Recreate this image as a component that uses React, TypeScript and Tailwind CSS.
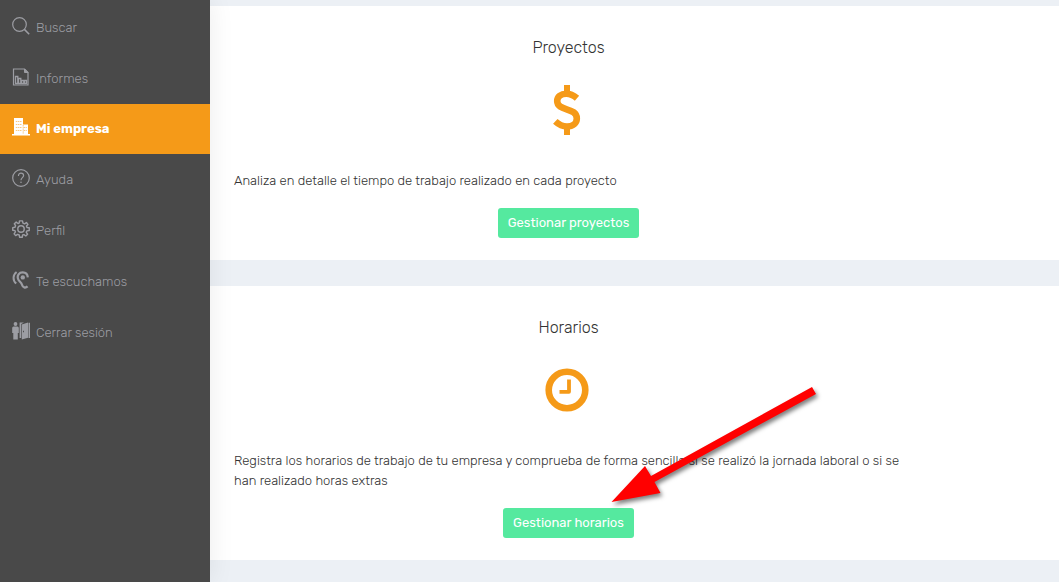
import type { ReactNode } from "react";
import { clsx } from "clsx";

interface NavItem {
  label: string;
  icon: ReactNode;
  active?: boolean;
}

function SearchIcon() {
  return (
    <svg className="size-[18px]" viewBox="0 0 18 18" fill="none" stroke="currentColor" aria-hidden="true">
      <circle cx="7.5" cy="7.5" r="6.8" strokeWidth="1.2" />
      <path d="M12.4 12.4 17.2 17.2" strokeWidth="1.5" />
    </svg>
  );
}

function ReportIcon() {
  return (
    <svg className="size-[18px]" viewBox="0 0 18 18" fill="none" stroke="currentColor" aria-hidden="true">
      <path d="M1.5 1H12.5L16 4.5V17H1.5Z" strokeWidth="1.2" />
      <path d="M12.5 1V4.5H16Z" fill="currentColor" />
      <path d="M3.5 15.5V8.5H5.8V15.5M6.5 15.5V10.5H8.8V15.5M9.5 15.5V12.5H11.8V15.5M12.5 15.5V12.5H14.5V15.5M3 15.5H15" strokeWidth="1.3" />
    </svg>
  );
}

function BuildingIcon() {
  return (
    <svg className="size-[18px]" viewBox="0 0 18 18" fill="currentColor" aria-hidden="true">
      <path d="M2 0H11V6.5H16V16H18V17.5H0V16H2Z" />
      <path
        d="M3.8 3.5H9.5M3.8 6.5H9.5M3.8 9.5H9.5M3.8 12.5H9.5M11.8 9.5H14.8M11.8 12.5H14.8M11.2 7V16"
        fill="none"
        stroke="#f59a18"
        strokeOpacity="0.6"
        strokeWidth="0.9"
        strokeDasharray="1.5 0.6"
      />
    </svg>
  );
}

function HelpIcon() {
  return (
    <svg className="size-[18px]" viewBox="0 0 18 18" fill="none" stroke="currentColor" aria-hidden="true">
      <circle cx="9" cy="9" r="8.3" strokeWidth="1.2" />
      <path d="M6.5 7C6.3 5 7.5 4.1 9 4.1S11.6 5 11.6 6.6C11.6 8.6 9 8.7 9 11.2" strokeWidth="1.2" />
      <circle cx="9" cy="13.3" r="0.8" fill="currentColor" stroke="none" />
    </svg>
  );
}

function GearIcon() {
  return (
    <svg className="size-[18px]" viewBox="0 0 24 24" fill="none" stroke="currentColor" strokeWidth="1.9" strokeLinejoin="round" aria-hidden="true">
      <path d="M10 1.2H14L14.6 4.2L16.7 5.1L19.2 3.4L21.2 5.9L19.3 8.1L20 10L23 10.4V14L19.8 14.5L19 16.5L20.8 19L18.4 21.3L15.9 19.5L14.2 20L13.6 23H10.2L9.6 20L7.4 19.2L4.9 20.8L2.8 18.4L4.5 15.8L4 14.2L1 13.6V10.2L4 9.6L4.8 7.4L3.1 5L5.6 2.8L8 4.6L9.5 4.1Z" />
      <circle cx="12" cy="12" r="4.3" />
    </svg>
  );
}

function EarIcon() {
  return (
    <svg className="size-[18px]" viewBox="0 0 18 18" fill="none" stroke="currentColor" aria-hidden="true">
      <path d="M15.8 6.4C15.6 3.2 13.4 1.4 10.7 1.4C7 1.4 5 4.5 6 7.8C6.8 10.5 9.3 11.2 10 13.8C10.7 16.6 13.4 17.4 15.6 15.4" strokeWidth="2.2" />
      <circle cx="10.8" cy="6.4" r="2.2" fill="currentColor" stroke="none" />
      <path d="M4.6 1C0.6 4 0.6 9.4 4.2 12.6" strokeWidth="2" />
    </svg>
  );
}

function ExitIcon() {
  return (
    <svg className="size-[18px]" viewBox="0 0 18 18" fill="currentColor" aria-hidden="true">
      <circle cx="3.5" cy="2" r="1.9" />
      <path d="M1.6 4.4H5.4Q6.8 4.6 6.8 6V11H5.8V17.4H1.3V11H0.2V6Q0.2 4.6 1.6 4.4Z" />
      <path d="M7.6 0.6H12L9.2 2V16H7.6Z" />
      <path d="M9.8 2.6 16 0.6V15.7L9.8 17.6ZM11 8.8V10.2H11.9V8.8Z" fillRule="evenodd" />
      <path d="M16.5 0.8H18V16H16.5Z" />
    </svg>
  );
}

function DollarIcon() {
  return (
    <svg className="h-[50px] w-7" viewBox="0 0 28 50" fill="none" stroke="currentColor" aria-hidden="true">
      <path d="M14 0V8M14 43V50" strokeWidth="6" />
      <path
        d="M24 13.2C20.5 10.2 17.3 8.7 13.3 8.7C7.8 8.7 4.2 11.8 4.2 16C4.2 26.5 23.8 22 23.8 33.5C23.8 38.2 19.8 41.5 14 41.5C9.2 41.5 6 39.8 2.3 36.4"
        strokeWidth="6.6"
      />
    </svg>
  );
}

function ClockIcon() {
  return (
    <svg className="size-11" viewBox="0 0 44 44" fill="none" stroke="currentColor" aria-hidden="true">
      <circle cx="22" cy="22" r="18.3" strokeWidth="6.6" />
      <path d="M24 11.5V23.8H14.5" strokeWidth="3.8" strokeLinejoin="round" />
    </svg>
  );
}

const navItems: NavItem[] = [
  { label: "Buscar", icon: <SearchIcon /> },
  { label: "Informes", icon: <ReportIcon /> },
  { label: "Mi empresa", icon: <BuildingIcon />, active: true },
  { label: "Ayuda", icon: <HelpIcon /> },
  { label: "Perfil", icon: <GearIcon /> },
  { label: "Te escuchamos", icon: <EarIcon /> },
  { label: "Cerrar sesión", icon: <ExitIcon /> },
];

function Sidebar() {
  return (
    <nav className="z-10 flex w-[210px] shrink-0 flex-col gap-px bg-[#494949] pt-[3px] shadow-[0_0_24px_rgba(0,0,0,0.08)]">
      {navItems.map((item) => (
        <a
          key={item.label}
          href="#"
          aria-current={item.active ? "page" : undefined}
          className={clsx(
            "flex h-[50px] items-center gap-1.5 pl-3 text-[13px]",
            item.active ? "-mt-px bg-[#f59a18] font-bold text-white" : "font-light text-[#9c9da3]",
          )}
        >
          <span className="-mt-1 flex w-[18px] shrink-0">{item.icon}</span>
          {item.label}
        </a>
      ))}
    </nav>
  );
}

interface PanelProps {
  title: string;
  icon: ReactNode;
  text: string;
  action: string;
  children?: ReactNode;
}

function Panel({ title, icon, text, action, children }: PanelProps) {
  return (
    <section className="relative flex flex-col items-center bg-white pt-[30px] pr-[156px] pb-[22px] pl-6">
      <h2 className="text-[16px] leading-6 font-light text-[#333]">{title}</h2>
      <div className="mt-[19px] flex h-[62px] items-center pr-1 text-[#f59a18]">{icon}</div>
      <p className="mt-[30px] w-full pr-1 text-justify text-[13px] leading-5 font-light text-[#333]">
        {text}
      </p>
      <button
        type="button"
        className="mt-[17px] h-[30px] rounded-[3px] bg-[#55e99f] px-2.5 text-[13px] font-normal text-white"
      >
        {action}
      </button>
      {children}
    </section>
  );
}

function PointerArrow() {
  return (
    <svg
      className="pointer-events-none absolute top-[94px] left-[400px] h-[130px] w-[215px] drop-shadow-[2px_3px_2px_rgba(0,0,0,0.5)]"
      viewBox="0 0 215 130"
      fill="#ff0000"
      aria-hidden="true"
    >
      <path d="M1.5 122 35 86 41 96 202 7 206 14 44.5 102 50.5 113Z" />
    </svg>
  );
}

export default function App() {
  return (
    <div className="flex min-h-screen bg-[#ecf0f5] font-[Rubik,Roboto,sans-serif]">
      <Sidebar />
      <main className="flex min-w-0 flex-1 flex-col gap-[26px] pt-1.5">
        <Panel
          title="Proyectos"
          icon={<DollarIcon />}
          text="Analiza en detalle el tiempo de trabajo realizado en cada proyecto"
          action="Gestionar proyectos"
        />
        <Panel
          title="Horarios"
          icon={<ClockIcon />}
          text="Registra los horarios de trabajo de tu empresa y comprueba de forma sencilla si se realizó la jornada laboral o si se han realizado horas extras"
          action="Gestionar horarios"
        >
          <PointerArrow />
        </Panel>
      </main>
    </div>
  );
}
